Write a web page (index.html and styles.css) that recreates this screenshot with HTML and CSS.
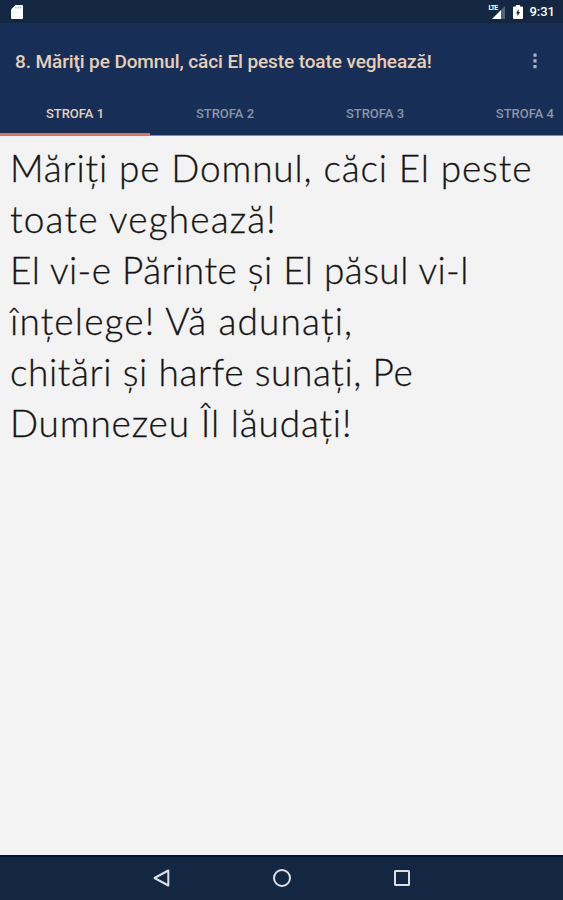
FILE: index.html
```html
<!DOCTYPE html>
<html lang="ro">
<head>
<meta charset="utf-8">
<title>8. Măriți pe Domnul</title>
<link rel="stylesheet" href="styles.css">
</head>
<body>
<div class="status">
  <svg class="sd" width="14" height="16" viewBox="0 0 14 16"><path d="M5.5 1H12a1 1 0 0 1 1 1v12a1 1 0 0 1-1 1H2a1 1 0 0 1-1-1V5.5z" fill="#fff"/><path d="M6 2.500v2M8.300 2.500v2M10.600 2.500v2" stroke="#a4adba" stroke-width="1.1"/></svg>
  <div class="signal"><span class="lte">LTE</span>
    <svg width="18" height="16" viewBox="0 0 18 16"><path d="M17 2v13H4z" fill="#536179"/><path d="M13 6V15H4z" fill="#fff"/></svg>
  </div>
  <svg class="battery" width="10" height="16" viewBox="0 0 10 16"><path d="M3 1h4v1.500h2a1 1 0 0 1 1 1V14a1 1 0 0 1-1 1H1a1 1 0 0 1-1-1V3.500a1 1 0 0 1 1-1h2z" fill="#fff"/><path d="M5.600 5v3h1.400L4.500 12.500V9.500H3z" fill="#132743"/></svg>
  <span class="clock">9:31</span>
</div>
<header class="appbar">
  <h1>8. Măriţi pe Domnul, căci El peste toate veghează!</h1>
  <svg class="more" width="4" height="16" viewBox="0 0 4 16" fill="#aeb3bb"><rect x=".4" y=".6" width="3.200" height="3.200" rx=".5"/><rect x=".4" y="6.300" width="3.200" height="3.200" rx=".5"/><rect x=".4" y="12" width="3.200" height="3.200" rx=".5"/></svg>
</header>
<nav class="tabs">
  <div class="tab active">STROFA 1</div>
  <div class="tab">STROFA 2</div>
  <div class="tab">STROFA 3</div>
  <div class="tab last">STROFA 4</div>
</nav>
<main class="verse">
  <p class="l1">Măriți pe Domnul, căci El peste</p>
  <p class="l2">toate veghează!</p>
  <p class="l3">El vi-e Părinte și El păsul vi-l</p>
  <p class="l4">înțelege! Vă adunați,</p>
  <p class="l5">chitări și harfe sunați, Pe</p>
  <p class="l6">Dumnezeu Îl lăudați!</p>
</main>
<footer class="navbar">
  <svg width="20" height="20" viewBox="0 0 20 20"><path d="M16.300 2.500v15L2.500 10z"/></svg>
  <svg width="20" height="20" viewBox="0 0 20 20"><circle cx="10" cy="10" r="8"/></svg>
  <svg width="20" height="20" viewBox="0 0 20 20"><rect x="3" y="3" width="14" height="14" rx=".5"/></svg>
</footer>
</body>
</html>
```

FILE: styles.css
```css
* { box-sizing: border-box; }
body {
  margin: 0;
  height: 900px;
  display: flex;
  flex-direction: column;
  overflow: hidden;
  background: #f3f3f3;
  font-family: Roboto, sans-serif;
}
.status {
  height: 23px;
  flex: none;
  display: flex;
  align-items: center;
  padding: 1px 8px 0 10px;
  background: #132743;
  color: #fff;
}
.signal { display: flex; margin-left: auto; margin-right: 7px; }
.lte { font-size: 7px; font-weight: 700; line-height: 8px; letter-spacing: -0.8px; margin: 0 -9px 0 0; z-index: 1; }
.battery { margin-right: 6px; }
.clock { font-size: 13px; font-weight: 500; line-height: 22px; }
.appbar {
  height: 70px;
  flex: none;
  display: flex;
  align-items: center;
  justify-content: space-between;
  padding: 7px 26px 0 15px;
  background: #172f56;
}
h1 { margin: 0; font-size: 19px; font-weight: 500; letter-spacing: -0.1px; color: #e8cfb6; white-space: nowrap; }
.more { margin-top: -1px; }
.tabs {
  height: 43px;
  flex: none;
  display: grid;
  grid-template-columns: 150px 150px 150px 1fr;
  background: #172f56;
  border-bottom: 1px solid #8890a0;
}
.tab {
  height: 42px;
  text-align: center;
  font-size: 13px;
  font-weight: 500;
  line-height: 42px;
  color: #9094a0;
}
.last { text-align: right; padding-right: 9px; }
.active { color: #e8cfb6; border-bottom: 2px solid #e0735c; }
.verse {
  flex: 1;
  padding: 6px 10px 0;
  font-family: Lato, sans-serif;
  font-weight: 300;
  font-size: 37px;
  line-height: 51px;
  color: #151515;
  -webkit-text-stroke: 0.3px #151515;
}
.verse p { margin: 0; white-space: nowrap; }
.l1 { letter-spacing: 0.85px; }
.l2 { letter-spacing: 1.15px; }
.l3 { letter-spacing: 0.46px; }
.l4 { letter-spacing: 1.15px; }
.l5 { letter-spacing: 0.6px; }
.l6 { letter-spacing: 0.83px; }
.navbar {
  height: 45px;
  flex: none;
  display: flex;
  justify-content: center;
  align-items: center;
  gap: 100px;
  padding-bottom: 2px;
  border-top: 2px solid #06123a;
  background: #132743;
}
.navbar svg { fill: none; stroke: #dddfe5; stroke-width: 2; stroke-linejoin: round; }
```
